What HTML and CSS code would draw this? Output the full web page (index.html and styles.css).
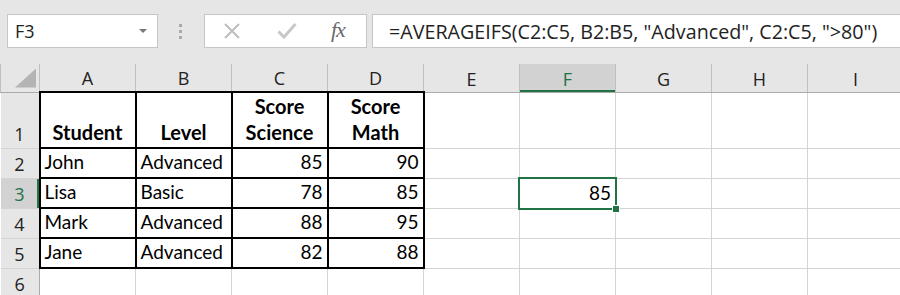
FILE: index.html
```html
<!DOCTYPE html>
<html lang="en">
<head>
    <meta charset="UTF-8">
    <title>AVERAGEIFS</title>
    <link rel="stylesheet" href="styles.css">
</head>
<body>
<!-- formula bar -->
<div class="Bar">
    <div class="Bar-name">
        <span>F3</span>
        <span class="Bar-caret"></span>
    </div>
    <div class="Bar-grip"><i></i><i></i><i></i></div>
    <div class="Bar-tools">
        <svg class="Bar-icon" width="18" height="18" viewBox="0 0 18 18">
            <path d="M2 2 L16 16 M16 2 L2 16" stroke="#bdbdbd" stroke-width="2" fill="none"/>
        </svg>
        <svg class="Bar-icon" width="20" height="18" viewBox="0 0 20 18">
            <path d="M1.5 9.5 L7 15 L18.5 2" stroke="#c8c8c8" stroke-width="3" fill="none"/>
        </svg>
        <span class="Bar-fx">fx</span>
    </div>
    <div class="Bar-formula">=AVERAGEIFS(C2:C5, B2:B5, "Advanced", C2:C5, "&gt;80")</div>
</div>

<!-- sheet -->
<table class="Sheet">
    <colgroup>
        <col class="Sheet-rowcol">
        <col><col><col><col><col><col><col><col><col>
    </colgroup>
    <tr class="Sheet-head">
        <th class="Sheet-corner"></th>
        <th>A</th><th>B</th><th>C</th><th>D</th><th>E</th>
        <th class="is-current">F</th><th>G</th><th>H</th><th>I</th>
    </tr>
    <tr class="Sheet-tall">
        <th class="Sheet-num">1</th>
        <td class="b bold center">Student</td>
        <td class="b bold center">Level</td>
        <td class="b bold center">Score<br>Science</td>
        <td class="b bold center">Score<br>Math</td>
        <td></td><td></td><td></td><td></td><td></td>
    </tr>
    <tr>
        <th class="Sheet-num">2</th>
        <td class="b">John</td>
        <td class="b">Advanced</td>
        <td class="b num">85</td>
        <td class="b num">90</td>
        <td></td><td></td><td></td><td></td><td></td>
    </tr>
    <tr>
        <th class="Sheet-num is-current">3</th>
        <td class="b">Lisa</td>
        <td class="b">Basic</td>
        <td class="b num">78</td>
        <td class="b num">85</td>
        <td></td>
        <td class="num is-selected">85</td>
        <td></td><td></td><td></td>
    </tr>
    <tr>
        <th class="Sheet-num">4</th>
        <td class="b">Mark</td>
        <td class="b">Advanced</td>
        <td class="b num">88</td>
        <td class="b num">95</td>
        <td></td><td></td><td></td><td></td><td></td>
    </tr>
    <tr>
        <th class="Sheet-num">5</th>
        <td class="b">Jane</td>
        <td class="b">Advanced</td>
        <td class="b num">82</td>
        <td class="b num">88</td>
        <td></td><td></td><td></td><td></td><td></td>
    </tr>
    <tr>
        <th class="Sheet-num">6</th>
        <td></td><td></td><td></td><td></td><td></td><td></td><td></td><td></td><td></td>
    </tr>
</table>
</body>
</html>
```

FILE: styles.css
```css
html, body {
    margin: 0;
    width: 900px;
    height: 295px;
    overflow: hidden;
}
body {
    background: #e6e6e6;
    font-family: "Open Sans", "DejaVu Sans", sans-serif;
    color: #222;
}

/* formula bar */
.Bar {
    display: flex;
    align-items: flex-start;
    height: 64px;
    padding: 14px 0 0 7px;
    box-sizing: border-box;
}
.Bar-name, .Bar-tools, .Bar-formula {
    height: 34px;
    box-sizing: border-box;
    background: #fff;
    border: 1px solid #c6c6c6;
    display: flex;
    align-items: center;
}
.Bar-name {
    width: 151px;
    padding: 0 0 0 7px;
    font-size: 18px;
    justify-content: space-between;
}
.Bar-caret {
    width: 0;
    height: 0;
    border-left: 4px solid transparent;
    border-right: 4px solid transparent;
    border-top: 4px solid #777;
    margin-right: 10px;
}
.Bar-grip {
    width: 46px;
    height: 34px;
    display: flex;
    flex-direction: column;
    align-items: center;
    justify-content: center;
    gap: 3px;
    padding-right: 1px;
    box-sizing: border-box;
}
.Bar-grip i {
    width: 3px;
    height: 3px;
    background: #a9a9a9;
}
.Bar-tools {
    width: 163px;
    padding: 0 0 0 18px;
}
.Bar-icon {
    display: block;
}
.Bar-icon + .Bar-icon {
    margin-left: 36px;
}
.Bar-fx {
    margin-left: 34px;
    font-family: "Liberation Serif", "DejaVu Serif", serif;
    font-style: italic;
    font-size: 22px;
    color: #6a6a6a;
    letter-spacing: -1px;
    padding-bottom: 3px;
}
.Bar-formula {
    flex: 1;
    margin: 0 -10px 0 5px;
    padding-left: 16px;
    border-right: none;
    font-size: 19.7px;
    white-space: nowrap;
}

/* sheet */
.Sheet {
    border-collapse: collapse;
    table-layout: fixed;
    width: 903px;
    background: #fff;
    font-family: Lato, "Liberation Sans", sans-serif;
    font-size: 19px;
    color: #000;
}
.Sheet col {
    width: 96px;
}
.Sheet col.Sheet-rowcol {
    width: 39px;
}
.Sheet th {
    background: #e6e6e6;
    font-family: "Open Sans", "DejaVu Sans", sans-serif;
    font-weight: normal;
    font-size: 18px;
    color: #222;
    padding: 0;
}
.Sheet-head th {
    height: 27px;
    border-left: 1px solid #c0c0c0;
    border-right: 1px solid #c0c0c0;
    border-bottom: 1px solid #ababab;
    vertical-align: bottom;
    line-height: 26px;
}
.Sheet-head th.is-current {
    background: #d2d2d2;
    color: #217346;
    box-shadow: inset 0 -2px 0 #217346;
}
.Sheet-corner {
    position: relative;
}
.Sheet-corner::after {
    content: '';
    position: absolute;
    right: 3px;
    bottom: 4px;
    width: 21px;
    height: 19px;
    background: #b4b4b4;
    clip-path: polygon(100% 0, 100% 100%, 0 100%);
}
.Sheet-num {
    height: 29px;
    border-right: 1px solid #ababab;
    border-bottom: 1px solid #d4d4d4;
    vertical-align: bottom;
    line-height: 27px;
}
.Sheet-num.is-current {
    background: #d2d2d2;
    color: #217346;
    box-shadow: inset -2px 0 0 #217346;
}
.Sheet td {
    height: 26px;
    padding: 0 4px 2px;
    border: 1px solid #d4d4d4;
    vertical-align: bottom;
    white-space: nowrap;
    line-height: 26px;
}
.Sheet-tall td, .Sheet-tall th {
    height: 51px;
}
.Sheet td.b {
    border: 2px solid #000;
}
.Sheet td.bold {
    font-weight: bold;
    font-size: 20px;
}
.Sheet td.center {
    text-align: center;
}
.Sheet td.num {
    text-align: right;
}
.Sheet td.is-selected {
    position: relative;
}
.is-selected::before {
    content: '';
    position: absolute;
    left: -2px;
    top: -2px;
    right: -2px;
    bottom: -2px;
    border: 2px solid #217346;
}
.is-selected::after {
    content: '';
    position: absolute;
    right: -5px;
    bottom: -5px;
    width: 6px;
    height: 6px;
    background: #217346;
    border: 1px solid #fff;
}
```
